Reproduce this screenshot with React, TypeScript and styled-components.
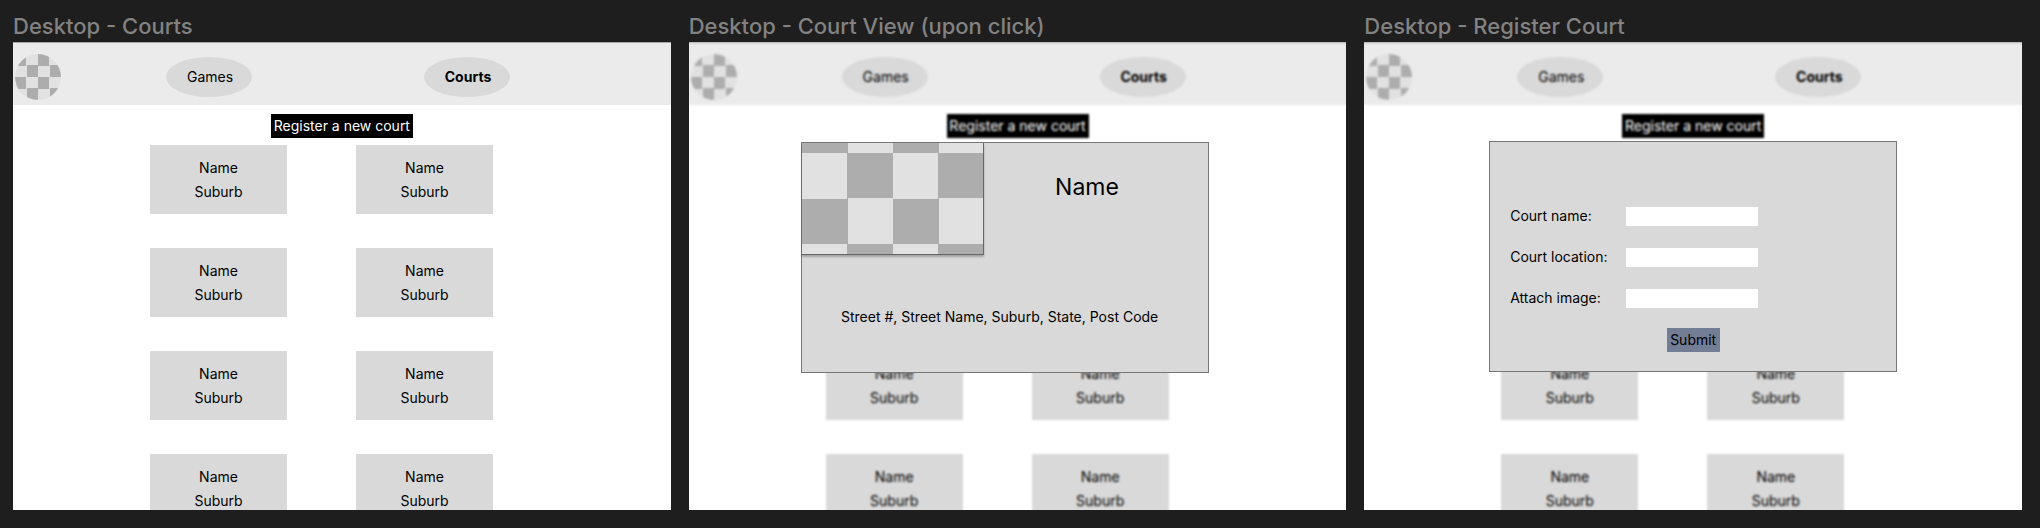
import React from "react";
import styled, { createGlobalStyle } from "styled-components";

const GlobalStyle = createGlobalStyle`
  *, *::before, *::after { box-sizing: border-box; }
  body {
    margin: 0;
    background: #1e1e1e;
    color: #000;
    font: 14px/24px Inter, "Liberation Sans", sans-serif;
  }
  button, input { font: inherit; color: inherit; }
`;

const Canvas = styled.main`
  display: flex;
  gap: 18px;
  height: 100vh;
  padding: 10px 18px 18px 13px;
`;

const Board = styled.section`
  flex: 1 1 0;
  min-width: 0;
  display: flex;
  flex-direction: column;
`;

const BoardTitle = styled.h2`
  margin: 0;
  font-size: 22px;
  line-height: 32px;
  font-weight: 500;
  color: #828282;
  white-space: nowrap;
`;

const Screen = styled.div`
  position: relative;
  flex: 1;
  min-height: 0;
  overflow: hidden;
  background: #fff;
`;

const Header = styled.header`
  display: flex;
  align-items: center;
  height: 63px;
  padding: 11px 2px 5px;
  border-top: 1px solid #a8a8a8;
  background: #ebebeb;
`;

const checker = (first: string, second: string) =>
  `conic-gradient(${first} 25%, ${second} 0 50%, ${first} 0 75%, ${second} 0)`;

const Logo = styled.div`
  width: 46px;
  height: 46px;
  border-radius: 50%;
  background: ${checker("#e1e1e1", "#adadad")} 0 0 / 23px 23px;
`;

const Nav = styled.nav`
  display: flex;
  gap: 172px;
  margin-left: 105px;
`;

const NavLink = styled.a<{ $active?: boolean }>`
  display: flex;
  align-items: center;
  justify-content: center;
  width: 86px;
  height: 40px;
  padding-left: 2px;
  border-radius: 50%;
  background: #d9d9d9;
  color: #000;
  font-weight: ${(p) => (p.$active ? 700 : 400)};
  text-decoration: none;
`;

const Actions = styled.div`
  display: flex;
  justify-content: center;
  padding: 9px 0 7px;
`;

const RegisterButton = styled.button`
  width: 142px;
  height: 24px;
  padding: 0;
  border: 0;
  background: #000;
  color: #fff;
  line-height: 24px;
  white-space: nowrap;
`;

const CourtGrid = styled.ul`
  display: grid;
  grid-template-columns: 137px 137px;
  gap: 34px 69px;
  margin: 0;
  padding: 0 0 0 137px;
  list-style: none;
`;

const CourtCard = styled.button`
  display: flex;
  flex-direction: column;
  align-items: center;
  width: 100%;
  height: 69px;
  padding: 11px 0 10px;
  border: 0;
  background: #d9d9d9;
`;

const Overlay = styled.div<{ $top: number; $shift?: number }>`
  position: absolute;
  inset: 0;
  display: flex;
  justify-content: center;
  align-items: flex-start;
  padding-top: ${(p) => p.$top}px;
  padding-right: ${(p) => p.$shift ?? 0}px;
  backdrop-filter: blur(1px);
`;

const Dialog = styled.div`
  width: 408px;
  min-height: 231px;
  border: 1px solid #777;
  background: #d9d9d9;
`;

const CourtSummary = styled.div`
  display: grid;
  grid-template-columns: 182px 1fr;
`;

const CourtImage = styled.div`
  height: 112px;
  border: solid #666;
  border-width: 0 1px 1px 0;
  box-shadow: 0 2px 2px rgba(0, 0, 0, 0.25);
  background: ${checker("#adadad", "#e1e1e1")} 0 10px / 91px 91px;
`;

const CourtName = styled.h3`
  margin: 0;
  padding: 28px 18px 0 0;
  font-size: 23px;
  line-height: 32px;
  font-weight: 400;
  text-align: center;
`;

const Address = styled.p`
  margin: 0;
  padding: 50px 0 0 39px;
  white-space: nowrap;
`;

const Form = styled.form`
  display: flex;
  flex-direction: column;
  align-items: center;
  padding: 62px 0 0 20px;
`;

const Fields = styled.div`
  display: grid;
  gap: 17px;
  align-self: stretch;
  margin-bottom: 18px;
`;

const Field = styled.div`
  display: grid;
  grid-template-columns: 116px 132px;
  align-items: center;
`;

const TextBox = styled.input`
  width: 100%;
  height: 19px;
  padding: 0 4px;
  border: 0;
  background: #fff;
`;

const SubmitButton = styled.button`
  width: 53px;
  height: 24px;
  margin-right: 20px;
  padding: 0;
  border: 0;
  background: #737d96;
`;

const COURTS = Array.from({ length: 8 }, () => ({ name: "Name", suburb: "Suburb" }));

const FIELDS = [
  { id: "court-name", label: "Court name:" },
  { id: "court-location", label: "Court location:" },
  { id: "court-image", label: "Attach image:" },
];

function CourtsBoard({ title, children }: { title: string; children?: React.ReactNode }) {
  return (
    <Board>
      <BoardTitle>{title}</BoardTitle>
      <Screen>
        <Header>
          <Logo />
          <Nav>
            <NavLink href="#games">Games</NavLink>
            <NavLink href="#courts" $active>
              Courts
            </NavLink>
          </Nav>
        </Header>
        <Actions>
          <RegisterButton type="button">Register a new court</RegisterButton>
        </Actions>
        <CourtGrid>
          {COURTS.map((court, i) => (
            <li key={i}>
              <CourtCard type="button">
                <span>{court.name}</span>
                <span>{court.suburb}</span>
              </CourtCard>
            </li>
          ))}
        </CourtGrid>
        {children}
      </Screen>
    </Board>
  );
}

export default function App() {
  return (
    <>
      <GlobalStyle />
      <Canvas>
        <CourtsBoard title="Desktop - Courts" />
        <CourtsBoard title="Desktop - Court View (upon click)">
          <Overlay $top={100} $shift={25}>
            <Dialog role="dialog" aria-labelledby="court-title">
              <CourtSummary>
                <CourtImage />
                <CourtName id="court-title">Name</CourtName>
              </CourtSummary>
              <Address>Street #, Street Name, Suburb, State, Post Code</Address>
            </Dialog>
          </Overlay>
        </CourtsBoard>
        <CourtsBoard title="Desktop - Register Court">
          <Overlay $top={99}>
            <Dialog role="dialog" aria-label="Register Court">
              <Form onSubmit={(e) => e.preventDefault()}>
                <Fields>
                  {FIELDS.map((f) => (
                    <Field key={f.id}>
                      <label htmlFor={f.id}>{f.label}</label>
                      <TextBox id={f.id} type="text" />
                    </Field>
                  ))}
                </Fields>
                <SubmitButton type="submit">Submit</SubmitButton>
              </Form>
            </Dialog>
          </Overlay>
        </CourtsBoard>
      </Canvas>
    </>
  );
}
